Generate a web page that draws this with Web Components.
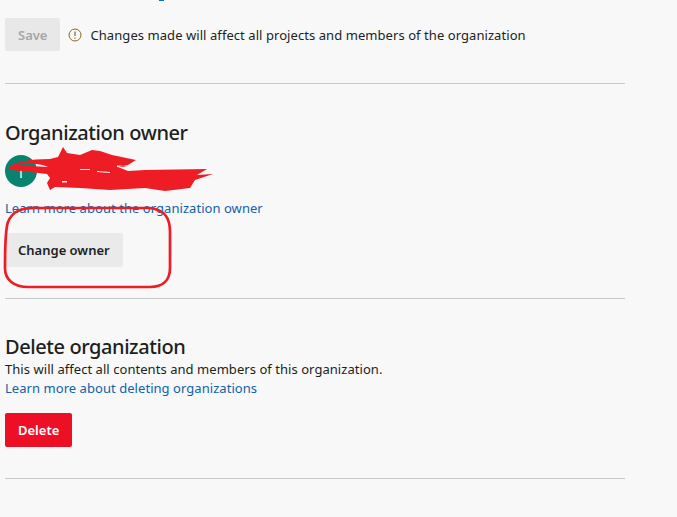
<!DOCTYPE html>
<html>
<head>
<meta charset="utf-8">
<style>
  html, body { margin: 0; height: 517px; overflow: hidden; background: #f8f8f8; }
  body { font-family: "Noto Sans", "Open Sans", sans-serif; font-size: 13px; color: #201f1e; letter-spacing: .05px; }
</style>
</head>
<body>
<settings-page>
  <form-section style="--pad-top:18px; --height:84px">
    <div class="row">
      <ui-button disabled>Save</ui-button>
      <warn-note>Changes made will affect all projects and members of the organization</warn-note>
    </div>
  </form-section>
  <form-section style="--pad-top:36px; --height:215px">
    <section-title>Organization owner</section-title>
    <owner-row></owner-row>
    <ui-link style="margin-top:12px">Learn more about the organization owner</ui-link>
    <ui-button style="margin-top:16px">Change owner</ui-button>
  </form-section>
  <form-section style="--pad-top:35px; --height:180px">
    <section-title>Delete organization</section-title>
    <div style="line-height:18px">This will affect all contents and members of this organization.</div>
    <ui-link style="margin-top:1px">Learn more about deleting organizations</ui-link>
    <ui-button danger style="margin-top:16px">Delete</ui-button>
  </form-section>
</settings-page>
<scribble-marks></scribble-marks>

<script>
class SettingsPage extends HTMLElement {
  constructor() {
    super();
    this.attachShadow({mode: 'open'}).innerHTML = `
      <style>:host{display:block;width:620px;margin-left:5px}</style><slot></slot>`;
  }
}
class FormSection extends HTMLElement {
  constructor() {
    super();
    this.attachShadow({mode: 'open'}).innerHTML = `
      <style>
        :host{display:block;box-sizing:border-box;height:var(--height);padding-top:var(--pad-top);border-bottom:1px solid #c8c8c8}
        ::slotted(ui-button){display:table}
        ::slotted(.row){display:flex;align-items:center;gap:8px}
      </style><slot></slot>`;
  }
}
class SectionTitle extends HTMLElement {
  constructor() {
    super();
    this.attachShadow({mode: 'open'}).innerHTML = `
      <style>:host{display:block;font-size:20px;font-weight:500;line-height:26px;color:#201f1e;letter-spacing:-.42px}</style><slot></slot>`;
  }
}
class UiLink extends HTMLElement {
  constructor() {
    super();
    this.attachShadow({mode: 'open'}).innerHTML = `
      <style>:host{display:block;color:#0f62ad;line-height:18px}</style><slot></slot>`;
  }
}
class UiButton extends HTMLElement {
  constructor() {
    super();
    this.attachShadow({mode: 'open'}).innerHTML = `
      <style>
        :host{display:inline-block;box-sizing:border-box;height:33px;line-height:34px;padding:0 13px;border-radius:2px;background:#eaeaea;color:#201f1e;font-weight:600;font-size:13px;letter-spacing:0;flex:none}
        :host([disabled]){background:#e8e8e8;color:#a6a6a6}
        :host([danger]){background:#ec0f26;color:#fff}
      </style><slot></slot>`;
  }
}
class WarnNote extends HTMLElement {
  constructor() {
    super();
    this.attachShadow({mode: 'open'}).innerHTML = `
      <style>
        :host{display:flex;align-items:center;gap:8px;letter-spacing:.065px}
        svg{width:14px;height:14px;flex:none}
      </style>
      <svg viewBox="0 0 14 14" fill="none" stroke="#8a6d1f" stroke-width="1">
        <circle cx="7" cy="7" r="6"/>
        <path d="M7 3.5v4.5M7 9.5v1.2" stroke="#5a4a1a"/>
      </svg>
      <span><slot></slot></span>`;
  }
}
class OwnerRow extends HTMLElement {
  constructor() {
    super();
    this.attachShadow({mode: 'open'}).innerHTML = `
      <style>
        :host{display:flex;align-items:center;margin-top:9px;height:32px}
        .avatar{width:32px;height:32px;border-radius:50%;color:#fff;font-size:14px;line-height:36px;text-align:center;background:#0a8270}
      </style>
      <div class="avatar">T</div>`;
  }
}
class ScribbleMarks extends HTMLElement {
  constructor() {
    super();
    this.attachShadow({mode: 'open'}).innerHTML = `
      <style>:host{position:absolute;left:0;top:0;width:677px;height:517px;pointer-events:none}svg{display:block}</style>
      <svg width="677" height="517" fill="none" stroke="#ee1c25">
        <path d="M159 0.5h5" stroke="#0f6cbd" stroke-width="1"/>
        <path stroke-width="2.7" d="M40 208C20 207 12 212 8 222C5 230 5 250 5 268C5 280 14 287 28 287L150 287C163 287 170 280 170 268L170 232C170 218 165 210 150 208Z"/>
        <path fill="#ee1c25" fill-rule="evenodd" stroke="none" d="M8 168C14 162 30 159 50 159L58 157L63 147L67 153L80 155L92 150L100 151L112 155L136 160L128 165L118 167L128 171L145 170L207 169L197 175L213 174L195 180L190 188L165 191L145 188L110 190L80 188L55 187L50 190L47 183L50 178L47 174L30 172L12 170Z
          M16 165C28 163 40 163 48 167L30 166Z
          M80 169L90 169L90 170L80 170Z
          M97 171L110 172L110 173L97 172Z
          M62 181L67 181L67 182.5L62 182.5Z
          M117 165.5L127 166L122 167L117 167Z"/>
      </svg>`;
  }
}
customElements.define('settings-page', SettingsPage);
customElements.define('form-section', FormSection);
customElements.define('section-title', SectionTitle);
customElements.define('ui-link', UiLink);
customElements.define('ui-button', UiButton);
customElements.define('warn-note', WarnNote);
customElements.define('owner-row', OwnerRow);
customElements.define('scribble-marks', ScribbleMarks);
</script>
</body>
</html>
